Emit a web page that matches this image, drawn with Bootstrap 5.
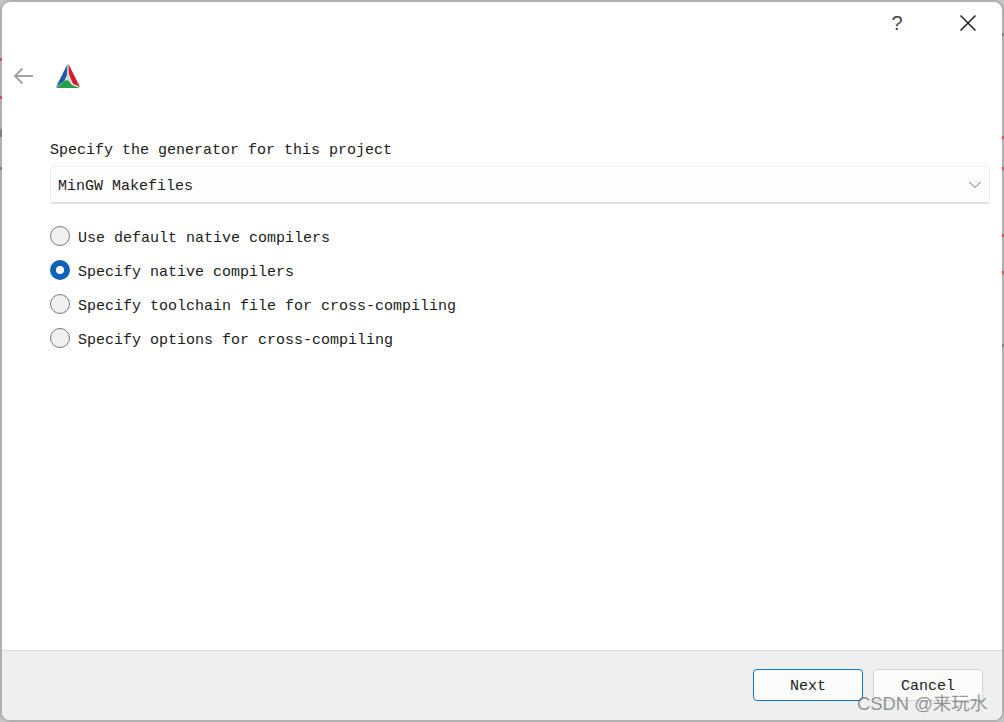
<!DOCTYPE html>
<html lang="en">
<head>
  <meta charset="UTF-8" />
  <title>CMake Setup</title>
  <link href="https://cdn.jsdelivr.net/npm/bootstrap@5.3.0/dist/css/bootstrap.min.css" rel="stylesheet" />
  <style>
    html, body { height: 722px; overflow: hidden; background: #c4c4c4; }
    body { font-family: "Liberation Mono", monospace; font-size: 15px; color: #1a1a1a; position: relative; }
    .win-frame { height: 722px; border: 2px solid #b0b0b0; border-radius: 10px; background: #fff; overflow: hidden; position: relative; }
    .title-row { height: 46px; padding: 0 26px 5px 0; }
    .help-btn { font-family: "Liberation Sans", sans-serif; font-size: 20px; font-weight: 300; width: 18px; margin-right: 54px; color: #444; text-align: center; line-height: 1; }
    .nav-row { height: 56px; padding-left: 11px; }
    .logo-gap { margin-left: 20px; }
    .wiz-body { padding: 0 12px 0 48px; flex: 1; }
    .gen-label { margin-top: 38px; height: 18px; line-height: 18px; }
    .gen-select { height: 38px; margin-top: 6px; padding: 0 8px 0 7px; border: 1px solid #efefef; border-bottom: 2px solid #e0e0e0; border-radius: 3px; background: #fefefe; }
    .select-text { padding-top: 5px; }
    .radio-list { margin-top: 22px; gap: 14px; }
    .radio-row { height: 20px; line-height: 20px; gap: 8px; }
    .radio-text { padding-top: 6px; }
    .radio-dot { width: 20px; height: 20px; border-radius: 50%; border: 1px solid #7a7a7a; background: #f0f0f0; flex: none; }
    .radio-dot.on { border: 6px solid #0f62b5; background: #fff; }
    .foot-bar { height: 70px; background: #efefef; border-top: 1px solid #dcdcdc; padding: 18px 19px 0 0; gap: 10px; }
    .wiz-btn { width: 110px; height: 32px; padding: 4px 0 0; font-size: 15px; border: 1px solid #d2d2d2; border-radius: 4px; background: #fbfbfb; color: #1a1a1a; line-height: 26px; }
    .wiz-btn.is-default { border-color: #0a74cf; }
    .csdn-mark { position: absolute; right: 14px; bottom: 5px; font-family: "Liberation Sans", "Noto Sans CJK SC", sans-serif; font-size: 18.4px; line-height: 22px; color: rgba(110,110,110,.72); }
    /* bits of the window behind that show through the frame */
    .edge-tick { position: absolute; width: 2px; height: 3px; background: #d2505c; }
    .edge-tick.at-left { left: 0; }
    .edge-tick.at-right { right: 0; }
    .edge-tick.is-grey { background: #808080; }
    .y33 { top: 33px; } .y59 { top: 58px; } .y97 { top: 96px; } .y137 { top: 136px; }
    .y168 { top: 167px; } .y235 { top: 234px; } .y272 { top: 271px; } .y345 { top: 344px; }
    .y130 { top: 129px; height: 8px; }
  </style>
</head>
<body>
  <div class="win-frame d-flex flex-column">
    <div class="title-row d-flex justify-content-end align-items-center">
      <span class="help-btn">?</span>
      <svg width="16" height="16" viewBox="0 0 16 16" fill="none" stroke="#222" stroke-width="1.5"><path d="M.5.5l15 15M15.500.5l-15 15"/></svg>
    </div>
    <div class="nav-row d-flex align-items-center">
      <svg width="22" height="18" viewBox="0 0 22 18" fill="none" stroke="#a3a3a3" stroke-width="2"><path d="M20 9H2M9.500 1.500L2 9l7.500 7.500"/></svg>
      <svg class="logo-gap" width="26" height="26" viewBox="0 0 26 26">
        <path d="M12.500 1L1 24l11-8z" fill="#1f5aa6"/>
        <path d="M13.500 1L25 24l-7-3-4.500-10z" fill="#d0202f"/>
        <path d="M12 15L1 25h24l-8-3z" fill="#2a9d4a"/>
        <path d="M13.200 9l4 11.500-5-3.500-3 1z" fill="#d9d9d9"/>
      </svg>
    </div>
    <div class="wiz-body d-flex flex-column">
      <div class="gen-label">Specify the generator for this project</div>
      <div class="gen-select d-flex justify-content-between align-items-center">
        <span class="select-text">MinGW Makefiles</span>
        <svg width="12" height="8" viewBox="0 0 12 8" fill="none" stroke="#666" stroke-width="1"><path d="M.5 1L6 6.500 11.500 1"/></svg>
      </div>
      <div class="radio-list d-flex flex-column">
        <div class="radio-row d-flex align-items-center"><span class="radio-dot"></span><span class="radio-text">Use default native compilers</span></div>
        <div class="radio-row d-flex align-items-center"><span class="radio-dot on"></span><span class="radio-text">Specify native compilers</span></div>
        <div class="radio-row d-flex align-items-center"><span class="radio-dot"></span><span class="radio-text">Specify toolchain file for cross-compiling</span></div>
        <div class="radio-row d-flex align-items-center"><span class="radio-dot"></span><span class="radio-text">Specify options for cross-compiling</span></div>
      </div>
    </div>
    <div class="foot-bar d-flex justify-content-end">
      <button type="button" class="btn wiz-btn is-default">Next</button>
      <button type="button" class="btn wiz-btn">Cancel</button>
    </div>
    <div class="csdn-mark">CSDN @来玩水</div>
  </div>
  <span class="edge-tick at-left y59"></span>
  <span class="edge-tick at-left y97"></span>
  <span class="edge-tick at-left is-grey y130"></span>
  <span class="edge-tick at-left is-grey y168"></span>
  <span class="edge-tick at-right is-grey y33"></span>
  <span class="edge-tick at-right y137"></span>
  <span class="edge-tick at-right y168"></span>
  <span class="edge-tick at-right y235"></span>
  <span class="edge-tick at-right y272"></span>
  <span class="edge-tick at-right is-grey y345"></span>
</body>
</html>
